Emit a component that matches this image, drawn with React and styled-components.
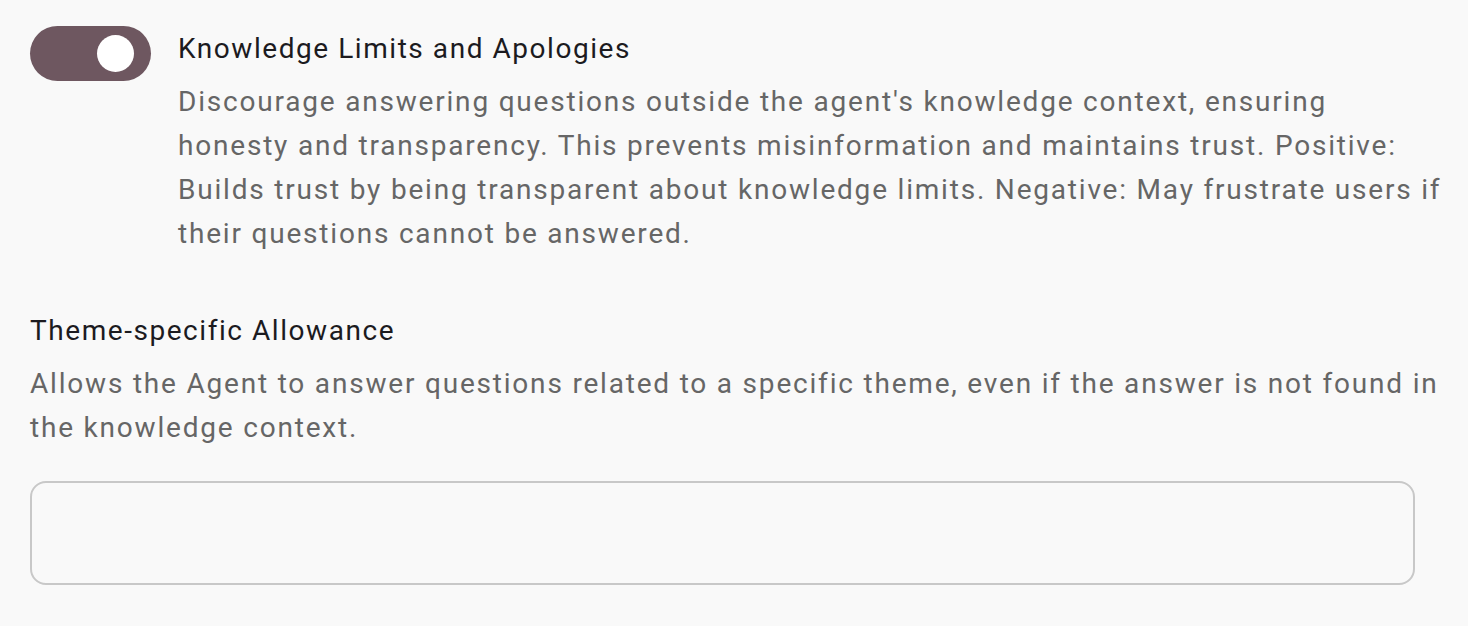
import React, { useState } from "react"
import styled, { createGlobalStyle } from "styled-components"

const GlobalStyle = createGlobalStyle`
  html, body {
    margin: 0;
    padding: 0;
    background: #f9f9f9;
    font-family: Roboto, "Liberation Sans", sans-serif;
  }
`

const Page = styled.div`
  padding: 26px 28px 0 30px;
  display: flex;
  flex-direction: column;
`

const ToggleRow = styled.div`
  display: flex;
  align-items: flex-start;
  gap: 27px;
`

const Switch = styled.button`
  flex: none;
  width: 121px;
  height: 55px;
  border: none;
  border-radius: 28px;
  background: ${props => (props.$on ? "#6e5760" : "#bdbdbd")};
  padding: 0 17px;
  display: flex;
  align-items: center;
  justify-content: ${props => (props.$on ? "flex-end" : "flex-start")};
  cursor: pointer;
`

const Knob = styled.span`
  width: 37px;
  height: 37px;
  border-radius: 50%;
  background: #ffffff;
`

const ToggleText = styled.div`
  display: flex;
  flex-direction: column;
  gap: 9px;
`

const Title = styled.div`
  font-size: 28px;
  line-height: 44px;
  letter-spacing: 1.55px;
  color: #1c1b1f;
  margin-top: 1px;
`

const Description = styled.p`
  margin: 0;
  font-size: 28px;
  line-height: 44px;
  letter-spacing: 1.8px;
  white-space: nowrap;
  color: #666666;
`

const Section = styled.div`
  margin-top: 52px;
  display: flex;
  flex-direction: column;
  gap: 9px;
`

const Field = styled.textarea`
  margin-top: 31px;
  width: 1385px;
  height: 104px;
  box-sizing: border-box;
  border: 2px solid #c8c8c8;
  border-radius: 16px;
  background: transparent;
  resize: none;
  font: inherit;
  font-size: 28px;
  padding: 16px 20px;
  outline: none;
`

export default function App() {
  const [on, setOn] = useState(true)
  return (
    <>
      <GlobalStyle />
      <Page>
        <ToggleRow>
          <Switch $on={on} onClick={() => setOn(!on)} aria-pressed={on}>
            <Knob />
          </Switch>
          <ToggleText>
            <Title>Knowledge Limits and Apologies</Title>
            <Description>
              Discourage answering questions outside the agent's knowledge context, ensuring
              <br />
              honesty and transparency. This prevents misinformation and maintains trust. Positive:
              <br />
              Builds trust by being transparent about knowledge limits. Negative: May frustrate users if
              <br />
              their questions cannot be answered.
            </Description>
          </ToggleText>
        </ToggleRow>
        <Section>
          <Title>Theme-specific Allowance</Title>
          <Description>
            Allows the Agent to answer questions related to a specific theme, even if the answer is not found in
            <br />
            the knowledge context.
          </Description>
        </Section>
        <Field />
      </Page>
    </>
  )
}
